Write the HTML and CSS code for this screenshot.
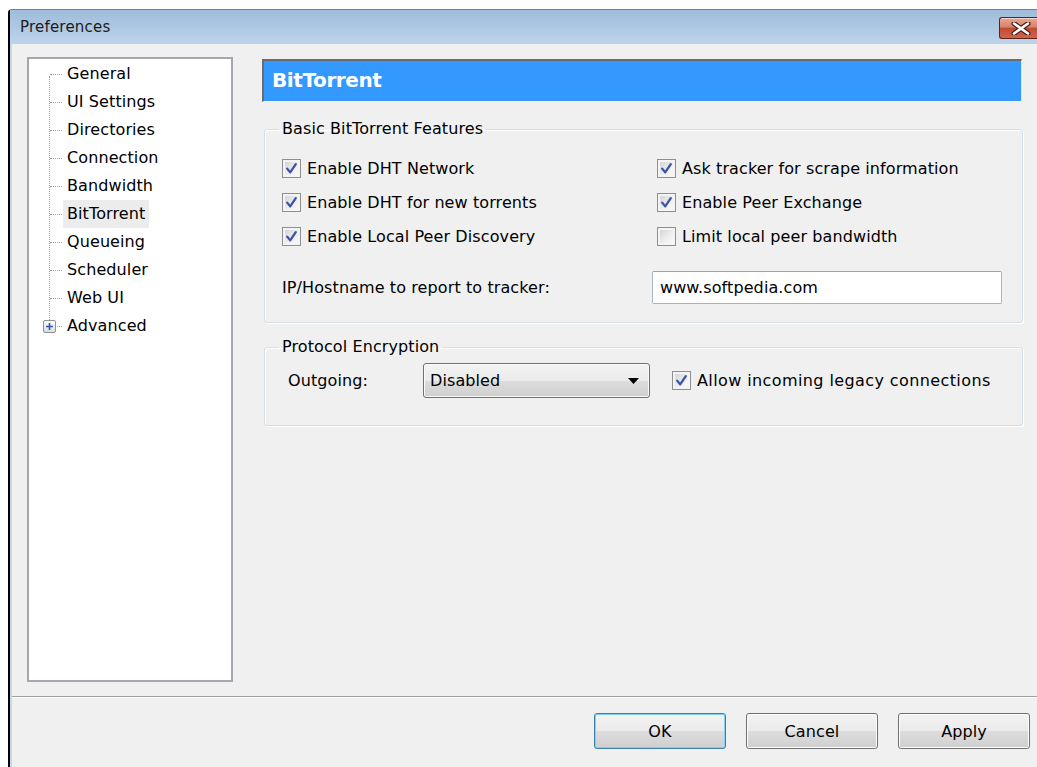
FILE: index.html
```html
<!DOCTYPE html>
<html lang="en">
<head>
<meta charset="utf-8">
<title>Preferences</title>
<link rel="stylesheet" href="styles.css">
</head>
<body>
<div class="window">
  <div class="titlebar">
    <span class="title">Preferences</span>
    <button class="close" type="button" aria-label="Close">
      <svg width="20" height="13" viewBox="0 0 20 13">
        <path d="M3 1.5 L17 11.5 M17 1.5 L3 11.5" stroke="#4a1d16" stroke-width="5" stroke-linecap="round" fill="none"/>
        <path d="M3 1.5 L17 11.5 M17 1.5 L3 11.5" stroke="#ffffff" stroke-width="2.6" stroke-linecap="round" fill="none"/>
      </svg>
    </button>
  </div>

  <div class="client">
    <div class="main">
      <nav class="tree">
        <ul class="tree-list">
          <li><span class="label">General</span></li>
          <li><span class="label">UI Settings</span></li>
          <li><span class="label">Directories</span></li>
          <li><span class="label">Connection</span></li>
          <li><span class="label">Bandwidth</span></li>
          <li class="selected"><span class="label">BitTorrent</span></li>
          <li><span class="label">Queueing</span></li>
          <li><span class="label">Scheduler</span></li>
          <li><span class="label">Web UI</span></li>
          <li class="branch">
            <span class="expander">
              <svg width="11" height="11" viewBox="0 0 11 11">
                <path d="M2 5.5 H9 M5.5 2 V9" stroke="#2f55b5" stroke-width="1.6" fill="none"/>
              </svg>
            </span>
            <span class="label">Advanced</span>
          </li>
        </ul>
      </nav>

      <section class="panel">
        <h1 class="page-title">BitTorrent</h1>

        <fieldset class="group group-basic">
          <legend>Basic BitTorrent Features</legend>
          <div class="check-grid">
            <label class="check"><span class="box"><svg class="tick" width="17" height="17" viewBox="0 0 17 17"><path d="M4.2 8.6 L7.2 12.4 L12.8 4.2" /></svg></span>Enable DHT Network</label>
            <label class="check"><span class="box"><svg class="tick" width="17" height="17" viewBox="0 0 17 17"><path d="M4.2 8.6 L7.2 12.4 L12.8 4.2" /></svg></span>Ask tracker for scrape information</label>
            <label class="check"><span class="box"><svg class="tick" width="17" height="17" viewBox="0 0 17 17"><path d="M4.2 8.6 L7.2 12.4 L12.8 4.2" /></svg></span>Enable DHT for new torrents</label>
            <label class="check"><span class="box"><svg class="tick" width="17" height="17" viewBox="0 0 17 17"><path d="M4.2 8.6 L7.2 12.4 L12.8 4.2" /></svg></span>Enable Peer Exchange</label>
            <label class="check"><span class="box"><svg class="tick" width="17" height="17" viewBox="0 0 17 17"><path d="M4.2 8.6 L7.2 12.4 L12.8 4.2" /></svg></span>Enable Local Peer Discovery</label>
            <label class="check"><span class="box"></span>Limit local peer bandwidth</label>
          </div>
          <div class="field-row">
            <span class="field-label">IP/Hostname to report to tracker:</span>
            <span class="text-input">www.softpedia.com</span>
          </div>
        </fieldset>

        <fieldset class="group group-encryption">
          <legend>Protocol Encryption</legend>
          <div class="enc-row">
            <span class="enc-label">Outgoing:</span>
            <span class="combo">
              <span class="combo-value">Disabled</span>
              <svg class="combo-arrow" width="11" height="6" viewBox="0 0 11 6"><path d="M0 0 H11 L5.5 6 Z" fill="#000"/></svg>
            </span>
            <label class="check legacy"><span class="box"><svg class="tick" width="17" height="17" viewBox="0 0 17 17"><path d="M4.2 8.6 L7.2 12.4 L12.8 4.2" /></svg></span>Allow incoming legacy connections</label>
          </div>
        </fieldset>
      </section>
    </div>

    <div class="footer">
      <button class="btn btn-default" type="button">OK</button>
      <button class="btn" type="button">Cancel</button>
      <button class="btn" type="button">Apply</button>
    </div>
  </div>
</div>
</body>
</html>
```

FILE: styles.css
```css
html, body {
  margin: 0;
  padding: 0;
}

body {
  background: #ffffff;
  font-family: "DejaVu Sans", sans-serif;
  font-size: 16px;
  letter-spacing: 0.1px;
  color: #000;
  overflow: hidden;
}

/* Window frame */
.window {
  margin: 9px 0 0 8px;
  width: 1029px;
  height: 758px;
  box-sizing: border-box;
  border-left: 2px solid #000;
  border-top: 1px solid #6f8296;
  border-top-left-radius: 4px;
  background: #c4d7ec;
  display: flex;
  flex-direction: column;
}

.titlebar {
  height: 34px;
  flex: 0 0 auto;
  display: flex;
  justify-content: space-between;
  align-items: flex-start;
  padding-left: 10px;
  background: linear-gradient(#9fbcda, #bdd4eb);
}

.title {
  margin-top: 8px;
  font-size: 15px;
  letter-spacing: 0.2px;
  color: #1b1b1b;
  line-height: 18px;
}

.close {
  margin-top: 7px;
  width: 38px;
  height: 22px;
  padding: 0 0 0 5px;
  border: 1px solid #5e231a;
  border-right: none;
  border-radius: 3px 0 0 3px;
  background: linear-gradient(#e9a894 0%, #d88069 45%, #c44a30 52%, #d0654a 100%);
  box-shadow: inset 0 1px 0 rgba(255, 255, 255, 0.5);
  display: flex;
  align-items: center;
  justify-content: center;
}

.close svg {
  display: block;
}

/* Client area */
.client {
  flex: 1;
  margin-left: 2px;
  background: #f0f0f0;
  display: flex;
  flex-direction: column;
}

.main {
  display: flex;
  align-items: flex-start;
  padding: 13px 0 0 15px;
}

/* Category tree */
.tree {
  width: 206px;
  height: 625px;
  box-sizing: border-box;
  border: 2px solid #a4a8ae;
  background: #ffffff;
  flex: 0 0 auto;
}

.tree-list {
  list-style: none;
  margin: 0;
  padding: 1px 0 0 34px;
  position: relative;
}

.tree-list::before {
  content: "";
  position: absolute;
  left: 20px;
  top: 17px;
  bottom: 14px;
  border-left: 1px dotted #9a9a9a;
}

.tree-list li {
  height: 28px;
  display: flex;
  align-items: center;
  position: relative;
}

.tree-list li::before {
  content: "";
  position: absolute;
  left: -13px;
  width: 12px;
  top: 14px;
  border-top: 1px dotted #9a9a9a;
}

.label {
  padding: 0 4px;
  line-height: 28px;
  white-space: nowrap;
}

.selected .label {
  background: #ececec;
}

.expander {
  position: absolute;
  left: -20px;
  top: 8px;
  width: 11px;
  height: 11px;
  border: 1px solid #8f9296;
  border-radius: 2px;
  background: linear-gradient(#ffffff, #dcdcdc);
  z-index: 1;
  display: flex;
}

.expander svg {
  display: block;
}

/* Settings page */
.panel {
  margin-left: 29px;
  padding-top: 2px;
  width: 760px;
}

.page-title {
  margin: 0;
  height: 43px;
  box-sizing: border-box;
  background: #3399ff;
  border-top: 2px solid #6b6b6b;
  border-left: 2px solid #6b6b6b;
  border-right: 1px solid #e6e6e6;
  border-bottom: 1px solid #ffffff;
  color: #ffffff;
  font-family: "DejaVu Sans", sans-serif;
  font-weight: bold;
  font-size: 20px;
  letter-spacing: -0.4px;
  padding: 0 0 3px 8px;
  display: flex;
  align-items: center;
}

.group {
  margin: 18px 0 0 2px;
  width: 759px;
  min-width: 0;
  box-sizing: border-box;
  border: 1px solid #d5dfe5;
  border-radius: 3px;
  box-shadow: inset 1px 1px 0 #ffffff, 1px 1px 0 #ffffff;
  padding: 13px 0 18px 17px;
}

.group legend {
  padding: 0 3px;
  margin-left: -3px;
  line-height: 18px;
  color: #000;
}

.group-encryption {
  margin-top: 15px;
  padding-top: 7px;
  padding-bottom: 27px;
}

.check-grid {
  display: grid;
  grid-template-columns: 375px 1fr;
  grid-template-rows: 35px 33px 34px;
  align-items: center;
}

.check {
  display: flex;
  align-items: center;
  white-space: nowrap;
}

.box {
  width: 17px;
  height: 17px;
  margin-right: 6px;
  border: 1px solid #8e8f8f;
  background: linear-gradient(135deg, #cfcfcf 0%, #f0f0f0 60%, #fbfbfb 100%);
  box-shadow: inset 0 0 0 2px #f4f4f4;
  flex: 0 0 auto;
  display: flex;
}

.tick {
  display: block;
}

.tick path {
  fill: none;
  stroke: #3b54a6;
  stroke-width: 2.3;
  stroke-linecap: round;
  stroke-linejoin: round;
}

.field-row {
  margin-top: 18px;
  height: 33px;
  display: flex;
  align-items: center;
}

.field-label {
  width: 370px;
  flex: 0 0 auto;
}

.text-input {
  width: 350px;
  height: 33px;
  box-sizing: border-box;
  border: 1px solid #abb5c2;
  border-top-color: #97a3b1;
  border-radius: 2px;
  background: #ffffff;
  padding-left: 7px;
  display: flex;
  align-items: center;
}

.enc-row {
  height: 35px;
  display: flex;
  align-items: center;
}

.enc-label {
  width: 135px;
  padding-left: 6px;
  flex: 0 0 auto;
}

.combo {
  width: 227px;
  height: 35px;
  box-sizing: border-box;
  border: 1px solid #707070;
  border-radius: 3px;
  background: linear-gradient(#f3f3f3 0%, #ebebeb 50%, #dddddd 51%, #cfcfcf 100%);
  box-shadow: inset 0 0 0 1px #fbfbfb;
  padding: 0 10px 0 6px;
  display: flex;
  align-items: center;
  justify-content: space-between;
  flex: 0 0 auto;
}

.legacy {
  margin-left: 22px;
  letter-spacing: 0.4px;
}

/* Dialog buttons */
.footer {
  margin-top: 14px;
  border-top: 1px solid #a0a0a0;
  box-shadow: inset 0 1px 0 #ffffff;
  padding: 16px 7px 0 0;
  display: flex;
  justify-content: flex-end;
  gap: 20px;
  flex: 1;
}

.btn {
  width: 132px;
  height: 36px;
  box-sizing: border-box;
  border: 1px solid #707070;
  border-radius: 3px;
  background: linear-gradient(#f3f3f3 0%, #ebebeb 50%, #dddddd 51%, #cfcfcf 100%);
  box-shadow: inset 0 0 0 1px #fcfcfc;
  font-family: "DejaVu Sans", sans-serif;
  font-size: 16px;
  letter-spacing: 0.1px;
  color: #000;
  padding: 0;
}

.btn-default {
  border-color: #3c7fb1;
  box-shadow: inset 0 0 0 1px #7fd0f2;
}
```
